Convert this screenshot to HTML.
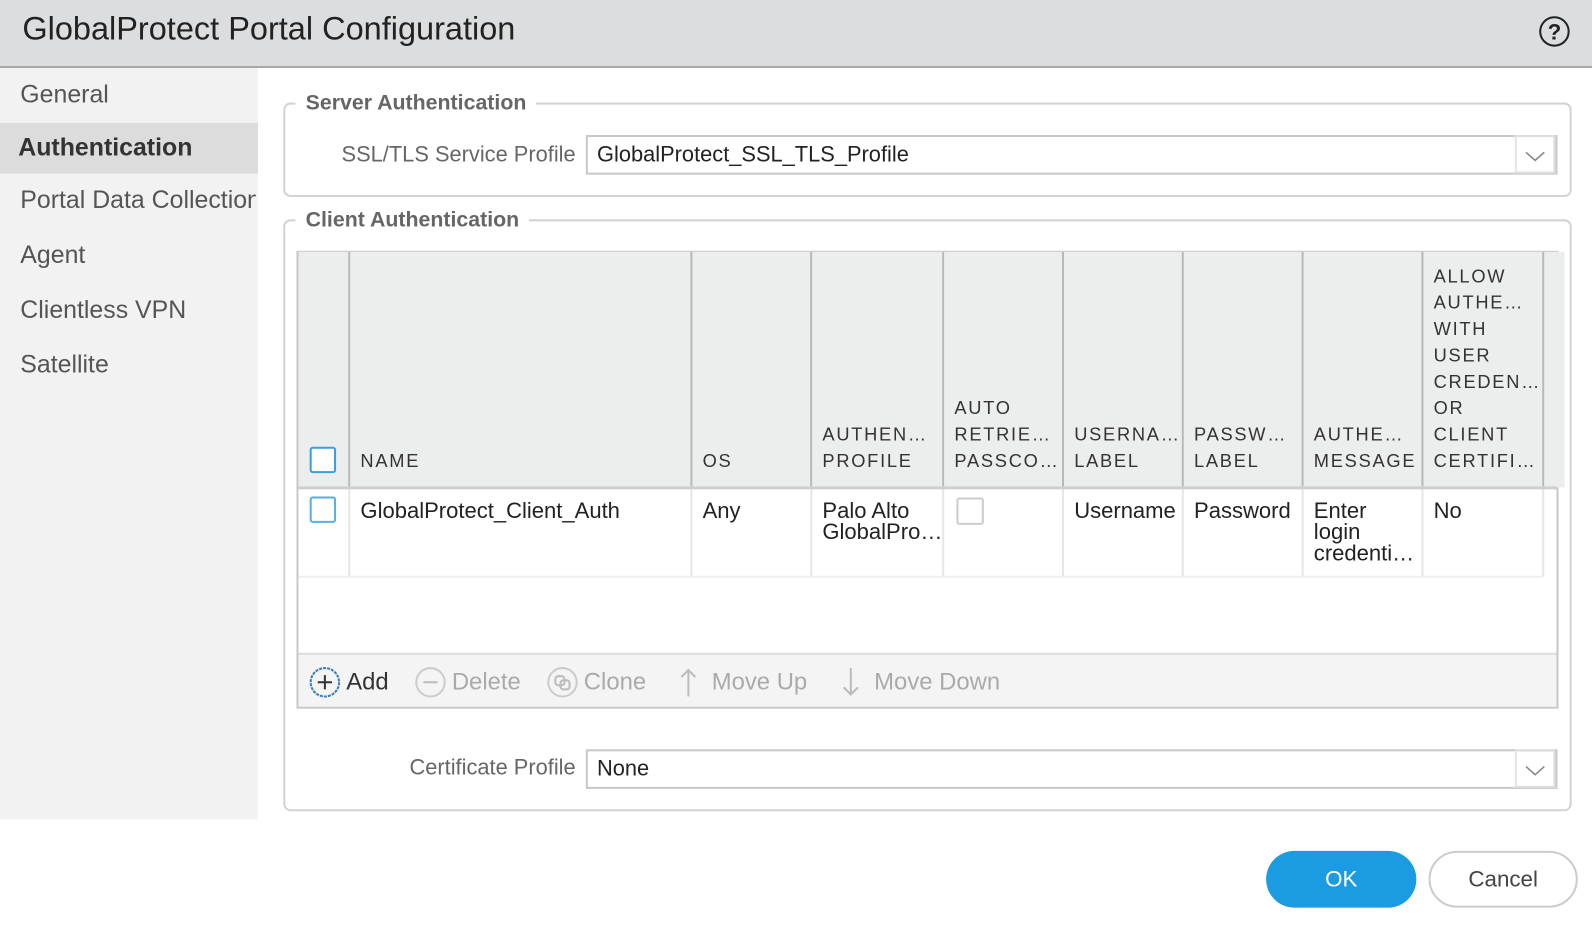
<!DOCTYPE html>
<html><head><style>
*{box-sizing:border-box;margin:0;padding:0}
html,body{width:1592px;height:932px;overflow:hidden;background:#fff}
#w{width:1568px;height:918px;transform:scale(1.01531);transform-origin:0 0;position:relative;font-family:"Liberation Sans",sans-serif;color:#222}
.abs{position:absolute}
.hdr{left:0;top:0;width:1568px;height:67px;background:#dcdddf;border-bottom:2px solid #a8a8a8}
.side{left:0;top:67px;width:254px;height:740px;background:#f2f2f2}
.nav{position:absolute;left:20px;font-size:24.5px;color:#555;white-space:nowrap}
.fs{border:2px solid #d3d3d3;border-radius:7px}
.lg{background:#fff;padding:0 10px;font-size:21px;font-weight:bold;color:#666}
.lbl{font-size:21.5px;color:#666;text-align:right}
.sel{border:2px solid #c8c8c8;font-size:21.5px;padding:5px 9px;color:#222}
.sel .ar{position:absolute;right:0;top:-2px;width:40px;height:38px;border:2px solid #ddd;border-left:2px solid #e5e5e5}
.th{position:absolute;top:248px;height:232px;background:#eceded;font-size:18px;letter-spacing:1.7px;color:#333;line-height:26px;padding:0 10px 13px;display:flex;flex-direction:column;justify-content:flex-end;border-right:2px solid #b8b8b8;white-space:nowrap;overflow:hidden}
.td{position:absolute;top:482px;height:86px;font-size:21.7px;line-height:21px;padding:10px 10px;border-right:2px solid #e6e6e6;color:#222;white-space:nowrap;overflow:hidden}
.cb{position:absolute;width:26px;height:26px;border:2px solid #3a9fdc;border-radius:3px;background:#fff}
.tb{font-size:23.5px;color:#aaa;position:absolute;top:658px}
</style></head><body><div id="w">
<div class="abs hdr"></div>
<div class="abs" style="left:22px;top:10px;font-size:32px;color:#222">GlobalProtect Portal Configuration</div>
<svg class="abs" style="left:1515px;top:15px" width="32" height="32" viewBox="0 0 32 32"><circle cx="16" cy="16" r="14" fill="none" stroke="#222" stroke-width="2"/><text x="16" y="24" font-size="22" font-family="Liberation Sans" text-anchor="middle" fill="#222" font-weight="bold">?</text></svg>

<div class="abs side"></div>
<div class="abs" style="left:0;top:121px;width:254px;height:50px;background:#dcdcdc"></div>
<div class="nav" style="top:80px">General</div>
<div class="nav" style="top:132px;left:18px;font-weight:bold;color:#333">Authentication</div>
<div class="nav" style="top:184px;width:232px;overflow:hidden">Portal Data Collection</div>
<div class="nav" style="top:238px">Agent</div>
<div class="nav" style="top:292px">Clientless VPN</div>
<div class="nav" style="top:346px">Satellite</div>

<div class="abs fs" style="left:279px;top:101px;width:1269px;height:93px"></div>
<div class="abs lg" style="left:291px;top:90px">Server Authentication</div>
<div class="abs lbl" style="left:300px;top:140px;width:267px">SSL/TLS Service Profile</div>
<div class="abs sel" style="left:577px;top:133px;width:957px;height:39px">GlobalProtect_SSL_TLS_Profile<div class="ar"><svg width="36" height="36"><path d="M9 15l9 8 9-8" fill="none" stroke="#888" stroke-width="1.6"/></svg></div></div>

<div class="abs fs" style="left:279px;top:216px;width:1269px;height:583px"></div>
<div class="abs lg" style="left:291px;top:205px">Client Authentication</div>

<div class="abs" style="left:292px;top:247px;width:1243px;height:451px;border:2px solid #c8c8c8;background:#fff"></div>
<div class="th" style="left:294px;width:51px"></div>
<div class="th" style="left:345px;width:337px">NAME</div>
<div class="th" style="left:682px;width:118px">OS</div>
<div class="th" style="left:800px;width:130px">AUTHEN…<br>PROFILE</div>
<div class="th" style="left:930px;width:118px">AUTO<br>RETRIE…<br>PASSCO…</div>
<div class="th" style="left:1048px;width:118px">USERNA…<br>LABEL</div>
<div class="th" style="left:1166px;width:118px">PASSW…<br>LABEL</div>
<div class="th" style="left:1284px;width:118px">AUTHE…<br>MESSAGE</div>
<div class="th" style="left:1402px;width:119px">ALLOW<br>AUTHE…<br>WITH<br>USER<br>CREDEN…<br>OR<br>CLIENT<br>CERTIFI…</div>
<div class="th" style="left:1521px;width:12px;border-right:none"></div>
<div class="abs" style="left:294px;top:479px;width:1239px;height:3px;background:#cfcfcf"></div>
<div class="cb" style="left:305px;top:440px"></div>

<div class="td" style="left:294px;width:51px"></div>
<div class="td" style="left:345px;width:337px">GlobalProtect_Client_Auth</div>
<div class="td" style="left:682px;width:118px">Any</div>
<div class="td" style="left:800px;width:130px">Palo Alto<br>GlobalPro…</div>
<div class="td" style="left:930px;width:118px"></div>
<div class="td" style="left:1048px;width:118px">Username</div>
<div class="td" style="left:1166px;width:118px">Password</div>
<div class="td" style="left:1284px;width:118px">Enter<br>login<br>credenti…</div>
<div class="td" style="left:1402px;width:119px">No</div>
<div class="abs" style="left:294px;top:567px;width:1225px;height:2px;background:#eee"></div>
<div class="cb" style="left:305px;top:489px;border-color:#5aaee0"></div>
<div class="abs" style="left:942px;top:490px;width:27px;height:27px;border:2px solid #ccc;border-radius:3px"></div>

<div class="abs" style="left:294px;top:643px;width:1239px;height:53px;background:#f4f4f4;border-top:2px solid #ddd"></div>
<svg class="abs" style="left:304px;top:656px" width="32" height="32"><circle cx="16" cy="16" r="14" fill="none" stroke="#3a7fb8" stroke-width="2" stroke-dasharray="3 1"/><path d="M16 9v14M9 16h14" stroke="#333" stroke-width="2"/></svg>
<div class="tb" style="left:341px;color:#333">Add</div>
<svg class="abs" style="left:408px;top:656px" width="32" height="32"><circle cx="16" cy="16" r="14" fill="none" stroke="#ccc" stroke-width="2"/><path d="M9 16h14" stroke="#bbb" stroke-width="2"/></svg>
<div class="tb" style="left:445px">Delete</div>
<svg class="abs" style="left:538px;top:656px" width="32" height="32"><circle cx="16" cy="16" r="14" fill="none" stroke="#ccc" stroke-width="2"/><rect x="9" y="10" width="9" height="9" rx="3" fill="none" stroke="#bbb" stroke-width="2"/><rect x="14" y="14" width="9" height="9" rx="3" fill="none" stroke="#bbb" stroke-width="2"/></svg>
<div class="tb" style="left:575px">Clone</div>
<svg class="abs" style="left:666px;top:656px" width="24" height="32"><path d="M12 4v26M5 11l7-7 7 7" fill="none" stroke="#bbb" stroke-width="2"/></svg>
<div class="tb" style="left:701px">Move Up</div>
<svg class="abs" style="left:826px;top:656px" width="24" height="32"><path d="M12 2v26M5 21l7 7 7-7" fill="none" stroke="#bbb" stroke-width="2"/></svg>
<div class="tb" style="left:861px">Move Down</div>

<div class="abs lbl" style="left:300px;top:744px;width:267px">Certificate Profile</div>
<div class="abs sel" style="left:577px;top:738px;width:957px;height:39px">None<div class="ar"><svg width="36" height="36"><path d="M9 15l9 8 9-8" fill="none" stroke="#888" stroke-width="1.6"/></svg></div></div>

<div class="abs" style="left:1247px;top:838px;width:148px;height:56px;background:#1a9be2;border-radius:28px;color:#fff;font-size:22px;text-align:center;line-height:56px">OK</div>
<div class="abs" style="left:1407px;top:838px;width:147px;height:56px;border:2px solid #ccc;border-radius:28px;color:#444;font-size:22px;text-align:center;line-height:52px">Cancel</div>
</div></body></html>
